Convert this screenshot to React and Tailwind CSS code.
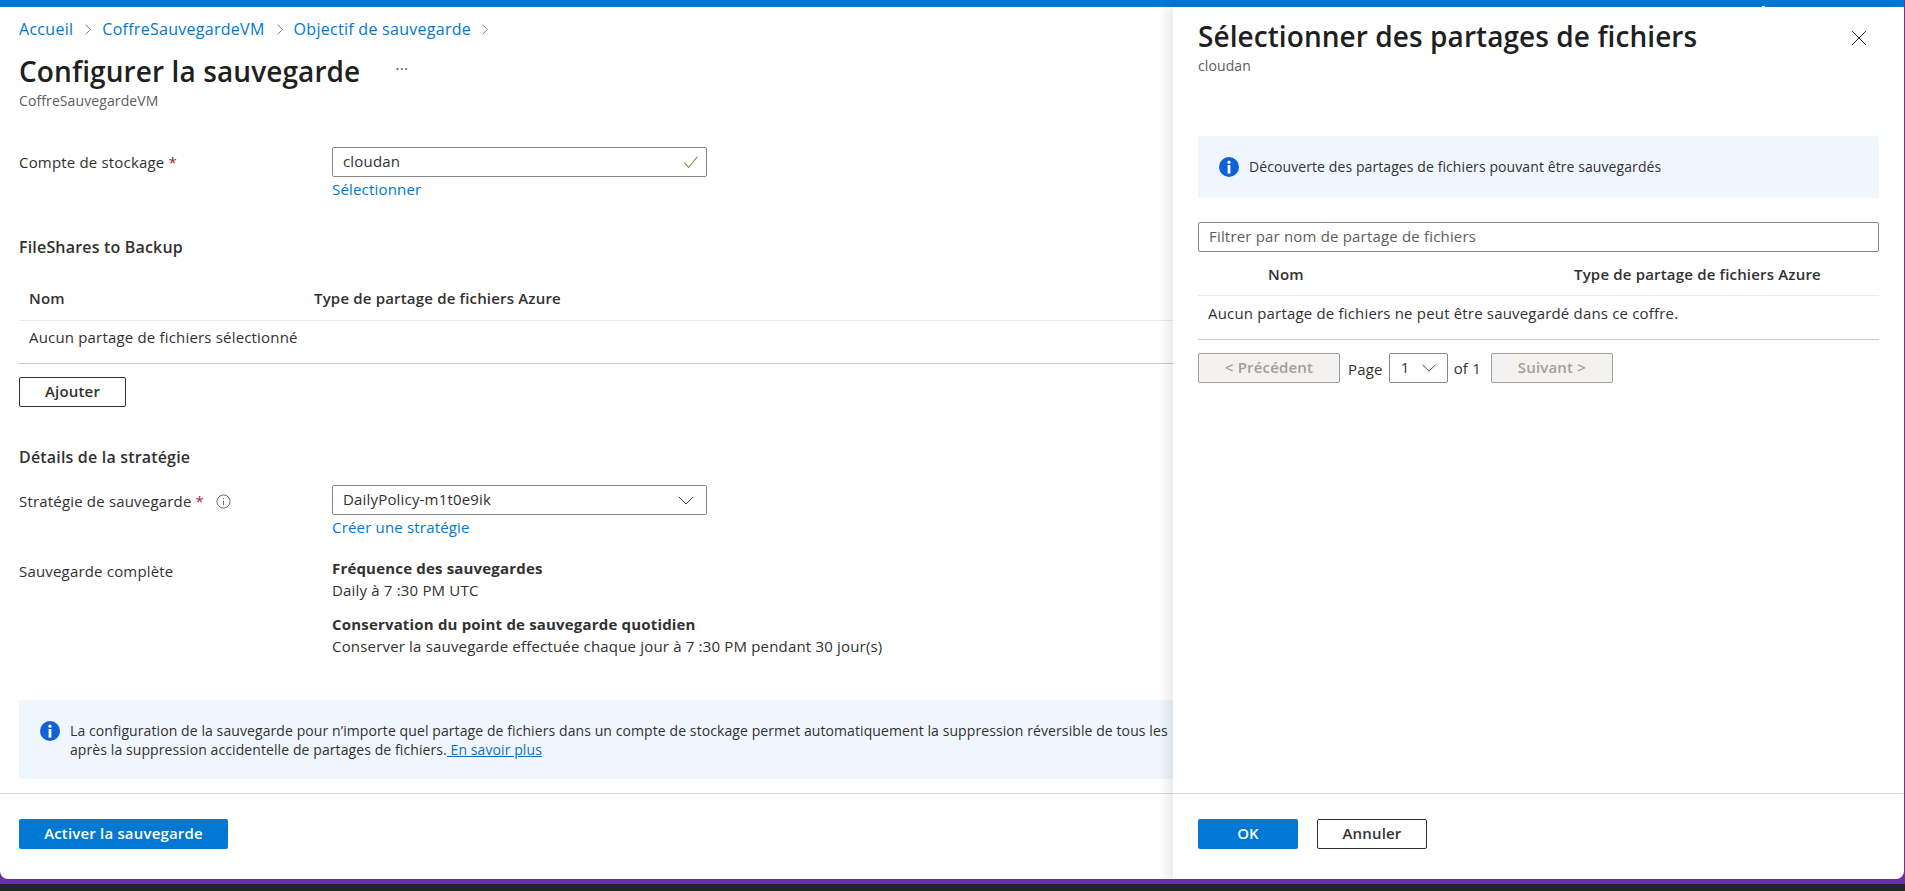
function Chev({ className }) {
  return (
    <svg viewBox="0 0 10 16" className={className} fill="none" stroke="#605e5c" strokeWidth="1">
      <path d="M2 2l6 6-6 6" />
    </svg>
  );
}
function Down({ className }) {
  return (
    <svg viewBox="0 0 18 10" className={className} fill="none" stroke="#323130" strokeWidth="1.1">
      <path d="M1 1l8 8 8-8" />
    </svg>
  );
}
function InfoFill() {
  return (
    <svg viewBox="0 0 20 20" className="w-5 h-5 shrink-0">
      <circle cx="10" cy="10" r="10" fill="#0f62d6" />
      <circle cx="10" cy="5.2" r="1.6" fill="#fff" />
      <rect x="8.6" y="8" width="2.8" height="8.6" fill="#fff" />
    </svg>
  );
}
function Th({ children, className }) {
  return <span className={"font-semibold " + className}>{children}</span>;
}

export default function App() {
  return (
    <div className="h-[891px] w-full bg-[#20262a] overflow-hidden text-[15px] leading-[20px] tracking-[0.18px] text-[#323130] font-['Open_Sans','Noto_Sans',sans-serif]">
      <div className="h-[884px] bg-[#6b2fa5] pr-px pb-[5px]">
        <div className="h-full bg-white rounded-b-lg overflow-hidden flex flex-col">
          <div className="h-[7px] shrink-0 bg-[#0078d4] flex justify-end">
            <span className="mt-[6px] mr-[139px] w-[3px] h-px bg-white" />
          </div>
          <div className="flex-1 flex min-h-0">
            {/* left blade */}
            <div className="flex-1 min-w-0 flex flex-col overflow-hidden">
              <div className="flex-1 pl-[19px]">
                <div className="mt-[10px] h-6 flex items-center text-[#0078d4] text-[16px] tracking-[0.28px]">
                  <span>Accueil</span>
                  <Chev className="w-[8px] h-[13px] ml-[11px] mr-[10px]" />
                  <span>CoffreSauvegardeVM</span>
                  <Chev className="w-[8px] h-[13px] ml-[11px] mr-[10px]" />
                  <span>Objectif de sauvegarde</span>
                  <Chev className="w-[8px] h-[13px] ml-[10px]" />
                </div>
                <div className="mt-[10px] h-10 flex items-center">
                  <h1 className="text-[28px] leading-10 font-semibold text-[#201f1e] tracking-[0.1px]">Configurer la sauvegarde</h1>
                  <span className="ml-[35px] text-[#605e5c] text-[16px] leading-none -mt-1">···</span>
                </div>
                <div className="text-[14px] tracking-[0.1px] text-[#605e5c]">CoffreSauvegardeVM</div>

                <div className="mt-9 flex">
                  <div className="w-[313px] pt-[5px]">Compte de stockage <span className="text-[#a4262c]">*</span></div>
                  <div>
                    <div className="w-[375px] h-[30px] border border-[#8a8886] rounded-[2px] flex items-center justify-between pl-[10px] pr-[7px]">
                      <span className="-mt-[2px]">cloudan</span>
                      <svg viewBox="0 0 16 16" className="w-4 h-4" fill="none" stroke="#57a300" strokeWidth="1.1"><path d="M1.5 8.5l4 5L14.5 2.5" /></svg>
                    </div>
                    <div className="mt-[2px] text-[#0078d4]">Sélectionner</div>
                  </div>
                </div>

                <h2 className="mt-[38px] font-semibold text-[16px]">FileShares to Backup</h2>
                <div className="mt-[19px] h-[45px] border-b border-[#edebe9] flex items-center pl-[10px]">
                  <Th className="w-[285px]">Nom</Th>
                  <Th>Type de partage de fichiers Azure</Th>
                </div>
                <div className="h-[43px] border-b border-[#c8c6c4] pl-[10px] pt-[6px]">Aucun partage de fichiers sélectionné</div>
                <button className="block mt-[13px] w-[107px] h-[30px] pb-[2px] border border-[#323130] rounded-[2px] font-semibold">Ajouter</button>

                <h2 className="mt-10 font-semibold text-[16px]">Détails de la stratégie</h2>
                <div className="mt-[18px] flex">
                  <div className="w-[313px] pt-[6px] flex items-start">
                    <span>Stratégie de sauvegarde <span className="text-[#a4262c]">*</span></span>
                    <svg viewBox="0 0 16 16" className="w-[15px] h-[15px] ml-[12px] mt-[3px]" fill="none" stroke="#605e5c"><circle cx="8" cy="8" r="7" /><path d="M8 7v5M8 4.2v1.2" /></svg>
                  </div>
                  <div>
                    <div className="w-[375px] h-[30px] border border-[#8a8886] rounded-[2px] flex items-center justify-between pl-[10px] pr-[12px]">
                      <span className="-mt-[2px]">DailyPolicy-m1t0e9ik</span>
                      <Down className="w-4 h-[9px]" />
                    </div>
                    <div className="mt-[2px] text-[#0078d4]">Créer une stratégie</div>
                  </div>
                </div>
                <div className="mt-[21px] flex">
                  <div className="w-[313px] pt-[3px]">Sauvegarde complète</div>
                  <div>
                    <div className="font-bold">Fréquence des sauvegardes</div>
                    <div className="mt-[2px]">Daily à 7 :30 PM UTC</div>
                    <div className="mt-[14px] font-bold">Conservation du point de sauvegarde quotidien</div>
                    <div className="mt-[2px]">Conserver la sauvegarde effectuée chaque jour à 7 :30 PM pendant 30 jour(s)</div>
                  </div>
                </div>
                <div className="mt-[44px] h-[79px] bg-[#eff6fe] flex items-center pl-[21px] whitespace-nowrap overflow-hidden rounded-l-[2px]">
                  <div className="self-start mt-[21px]"><InfoFill /></div>
                  <div className="ml-[10px] leading-[19px] text-[14px] tracking-[0.09px]">
                    La configuration de la sauvegarde pour n’importe quel partage de fichiers dans un compte de stockage permet automatiquement la suppression réversible de tous les<br />
                    après la suppression accidentelle de partages de fichiers.<a className="text-[#106ebe] underline"> En savoir plus </a>
                  </div>
                </div>
              </div>
              <div className="h-[86px] shrink-0 border-t border-[#dcdcdc] pt-[25px] pl-[19px]">
                <button className="w-[209px] h-[30px] pb-[2px] bg-[#0078d4] text-white font-semibold rounded-[2px]">Activer la sauvegarde</button>
              </div>
            </div>

            {/* right panel */}
            <div className="w-[731px] shrink-0 flex flex-col shadow-[-6px_0_10px_rgba(0,0,0,0.09)] relative">
              <div className="flex-1 px-[25px]">
                <div className="pt-[8px] flex justify-between items-center h-[50px]">
                  <h2 className="text-[28px] leading-10 font-semibold text-[#201f1e] tracking-[0.07px]">Sélectionner des partages de fichiers</h2>
                  <svg viewBox="0 0 16 16" className="w-4 h-4 mr-[12px] mt-[3px]" fill="none" stroke="#323130" strokeWidth="1"><path d="M1 1l14 14M15 1L1 15" /></svg>
                </div>
                <div className="-mt-px text-[14px] tracking-[0.1px] text-[#605e5c]">cloudan</div>
                <div className="mt-[60px] h-[62px] bg-[#eff6fe] flex items-center pl-[21px] rounded-[2px]">
                  <InfoFill />
                  <span className="ml-[10px] text-[14px] tracking-[0.09px]">Découverte des partages de fichiers pouvant être sauvegardés</span>
                </div>
                <div className="mt-6 h-[30px] border border-[#8a8886] rounded-[2px] flex items-center pl-[10px] text-[#605e5c]"><span className="-mt-[2px]">Filtrer par nom de partage de fichiers</span></div>
                <div className="h-[44px] border-b border-[#edebe9] flex items-center pl-[70px] pt-px">
                  <Th className="w-[306px]">Nom</Th>
                  <Th>Type de partage de fichiers Azure</Th>
                </div>
                <div className="h-[44px] border-b border-[#c8c6c4] pl-[10px] pt-[7px]">Aucun partage de fichiers ne peut être sauvegardé dans ce coffre.</div>
                <div className="mt-[13px] flex items-center h-[30px]">
                  <button className="w-[142px] h-[30px] pb-[2px] bg-[#f3f2f1] border border-[#a19f9d] rounded-[2px] text-[#a19f9d] font-semibold">&lt; Précédent</button>
                  <span className="ml-2 mt-[2px]">Page</span>
                  <div className="ml-[6px] w-[59px] h-[30px] border border-[#8a8886] rounded-[2px] flex items-center justify-between pl-[11px] pr-[10px]">
                    <span className="-mt-[2px]">1</span><Down className="w-4 h-2" />
                  </div>
                  <span className="ml-[6px]">of 1</span>
                  <button className="ml-[10px] w-[122px] h-[30px] pb-[2px] bg-[#f3f2f1] border border-[#a19f9d] rounded-[2px] text-[#a19f9d] font-semibold">Suivant &gt;</button>
                </div>
              </div>
              <div className="h-[86px] shrink-0 border-t border-[#dcdcdc] pt-[25px] pl-[25px] flex items-start">
                <button className="w-[100px] h-[30px] pb-[2px] bg-[#0078d4] text-white font-semibold rounded-[2px]">OK</button>
                <button className="ml-[19px] w-[110px] h-[30px] pb-[2px] border border-[#323130] rounded-[2px] font-semibold">Annuler</button>
              </div>
            </div>
          </div>
        </div>
      </div>
    </div>
  );
}
